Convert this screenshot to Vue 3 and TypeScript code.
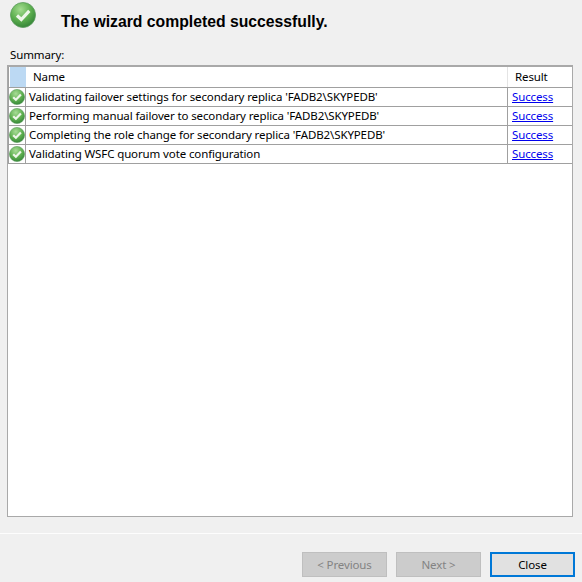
<script setup lang="ts">
const rows: string[] = [
  "Validating failover settings for secondary replica 'FADB2\\SKYPEDB'",
  "Performing manual failover to secondary replica 'FADB2\\SKYPEDB'",
  "Completing the role change for secondary replica 'FADB2\\SKYPEDB'",
  "Validating WSFC quorum vote configuration",
];
</script>

<template>
  <div class="page">
    <header class="head">
      <svg class="big" viewBox="0 0 26 26" width="26" height="26">
        <defs>
          <radialGradient id="bg" cx="40%" cy="28%" r="78%">
            <stop offset="0" stop-color="#a4dc90" />
            <stop offset="0.55" stop-color="#5cae4e" />
            <stop offset="1" stop-color="#2f7f35" />
          </radialGradient>
        </defs>
        <circle cx="13" cy="13" r="12.5" fill="url(#bg)" stroke="#5b9a5c" stroke-width="0.8" />
        <path d="M7 13.5l4.3 4L19.3 8.8" fill="none" stroke="#eef6ea" stroke-width="3.2" />
      </svg>
      <h1 class="title">The wizard completed successfully.</h1>
    </header>
    <div class="label">Summary:</div>
    <div class="grid">
      <div class="row hrow">
        <div class="c-icon corner"></div>
        <div class="c-name hname">Name</div>
        <div class="c-res hres">Result</div>
      </div>
      <div v-for="r in rows" :key="r" class="row drow">
        <div class="c-icon">
          <svg viewBox="0 0 16 16" width="16" height="16">
            <defs>
              <radialGradient id="sg" cx="42%" cy="28%" r="78%">
                <stop offset="0" stop-color="#a8dc96" />
                <stop offset="0.55" stop-color="#5fb050" />
                <stop offset="1" stop-color="#2f8035" />
              </radialGradient>
            </defs>
            <circle cx="8" cy="8" r="7.6" fill="url(#sg)" stroke="#5b9a5c" stroke-width="0.6" />
            <path d="M4.2 8.2l2.7 2.6 5-5.2" fill="none" stroke="#eef6ea" stroke-width="2.2" />
          </svg>
        </div>
        <div class="c-name text">{{ r }}</div>
        <div class="c-res"><a class="link" href="#">Success</a></div>
      </div>
    </div>
    <div class="rule"></div>
    <footer class="foot">
      <button class="btn off" disabled>&lt; Previous</button>
      <button class="btn off" disabled>Next &gt;</button>
      <button class="btn main">Close</button>
    </footer>
  </div>
</template>

<style>
html, body { margin: 0; background: #f0f0f0; }
</style>

<style scoped>
.page {
  width: 582px;
  height: 582px;
  box-sizing: border-box;
  background: #f0f0f0;
  display: flex;
  flex-direction: column;
  font-family: "Noto Sans", sans-serif;
  font-size: 11.5px;
  letter-spacing: -0.12px;
  color: #000;
  overflow: hidden;
}
.head {
  height: 46px;
  flex: none;
  display: flex;
  align-items: flex-start;
  padding-left: 10px;
  box-sizing: border-box;
}
.big { margin-top: 2px; flex: none; }
.title {
  margin: 13px 0 0 25px;
  font-family: "Liberation Sans", sans-serif;
  font-size: 15.75px;
  letter-spacing: 0;
  font-weight: 700;
  line-height: 17px;
  white-space: nowrap;
}
.label {
  height: 19px;
  line-height: 17px;
  padding-left: 10px;
  flex: none;
}
.grid {
  height: 452px;
  margin-left: 7px;
  width: 566px;
  flex: none;
  box-sizing: border-box;
  background: #fff;
  border: 1px solid #a9a9a9;
  border-top-width: 2px;
}
.row { display: flex; box-sizing: border-box; border-left: 1px solid #a0a0a0; }
.hrow { height: 21px; border-bottom: 1px solid #a0a0a0; }
.drow { height: 19px; border-bottom: 1px solid #a0a0a0; }
.c-icon { width: 17px; flex: none; box-sizing: border-box; display: flex; align-items: center; justify-content: center; border-right: 1px solid #a0a0a0; }
.c-name { flex: 1; min-width: 0; white-space: nowrap; }
.c-res { width: 65px; flex: none; border-left: 1px solid #a0a0a0; box-sizing: border-box; padding-left: 4px; line-height: 18px; }
.corner { background: #bcd9f3; margin-left: 1px; width: 16px; border-right: none; }
.hname { padding-left: 7px; line-height: 20px; }
.hres { border-left-color: #e4e4e4; padding-left: 7px; line-height: 20px; }
.text { padding-left: 3px; line-height: 18px; }
.link { color: #0000ee; text-decoration: underline; }
.rule { flex: none; height: 1px; margin-top: 16px; background: #fdfdfd; }
.foot {
  flex: 1;
  display: flex;
  justify-content: flex-end;
  gap: 9px;
  padding: 18px 7px 0 0;
  box-sizing: border-box;
}
.btn {
  width: 85px;
  height: 25px;
  box-sizing: border-box;
  font: inherit;
  letter-spacing: inherit;
  padding: 0;
  background: #e1e1e1;
  color: #000;
}
.off { background: #cccccc; border: 1px solid #bfbfbf; color: #838383; }
.main { border: 2px solid #0078d7; background: #e1e1e1; }
</style>
